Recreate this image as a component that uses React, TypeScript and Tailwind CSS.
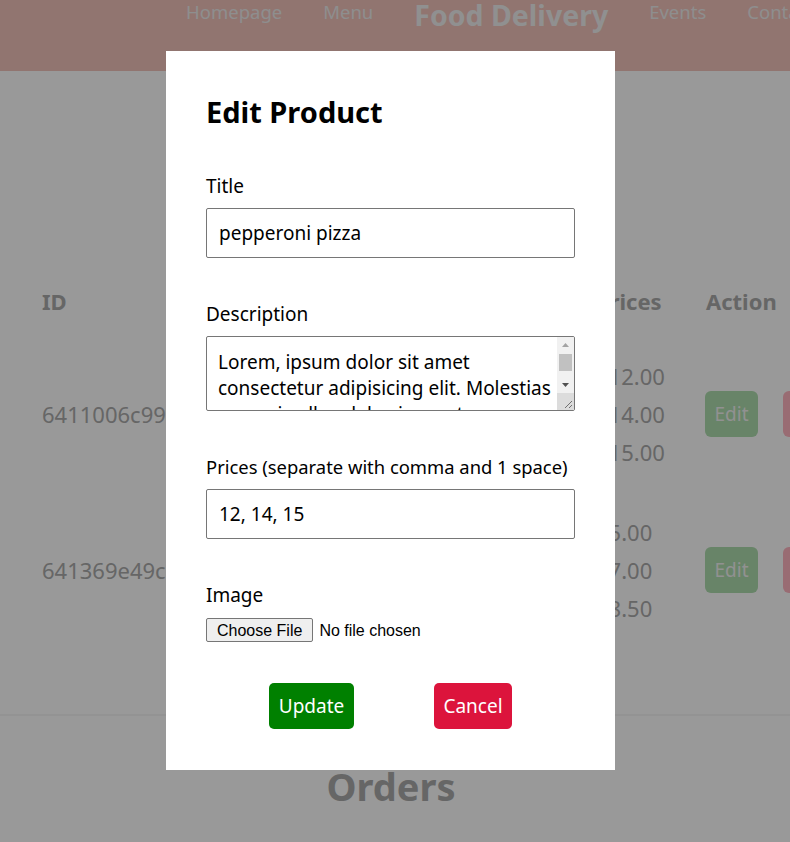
export default function App() {
  const rows = [
    { id: "6411006c99b6a7e8", prices: ["$12.00", "$14.00", "$15.00"], top: "mt-[41px]" },
    { id: "641369e49c2a11f0", prices: ["$5.00", "$7.00", "$8.50"], top: "mt-[42px]" },
  ];

  return (
    <div className="relative h-[842px] w-[790px] overflow-hidden bg-white font-['Noto_Sans',sans-serif]">
      {/* page behind the modal */}
      <header className="h-[71px] bg-[#f2c3bb] overflow-hidden">
        <nav className="flex items-start gap-[41px] pl-[186px] whitespace-nowrap text-[#ededed] text-[18.5px] leading-[24px]">
          <span>Homepage</span>
          <span>Menu</span>
          <span className="text-[28.5px] leading-[30px] font-bold text-[#f0f0f0]">Food Delivery</span>
          <span>Events</span>
          <span>Contact</span>
        </nav>
      </header>

      <div className="pl-[42px] pt-[215px] text-[#aaa] text-[22px] whitespace-nowrap">
        <div className="flex items-center h-[30px] font-bold">
          <span className="w-[554px] shrink-0">ID</span>
          <span className="w-[110px] shrink-0">Prices</span>
          <span className="shrink-0">Action</span>
        </div>
        {rows.map((r) => (
          <div key={r.id} className={`flex items-center ${r.top}`}>
            <span className="w-[554px] shrink-0">{r.id}</span>
            <div className="flex flex-col leading-[38px] w-[109px] shrink-0">
              {r.prices.map((p) => (
                <span key={p}>{p}</span>
              ))}
            </div>
            <span className="shrink-0 bg-[#addcad] text-[#f2f2f2] text-[19px] rounded-[6px] w-[53px] h-[46px] flex items-center justify-center">Edit</span>
            <span className="shrink-0 ml-[25px] bg-[#ffb4c0] rounded-[6px] w-[60px] h-[46px]"></span>
          </div>
        ))}
      </div>

      <div className="mt-[87px] border-t-2 border-[#f5f5f5]"></div>
      <h2 className="mt-[46px] pr-[8px] text-center text-[38px] font-bold leading-[48px] text-[#aaa]">Orders</h2>

      {/* overlay + modal */}
      <div className="absolute inset-0 bg-black/40 pt-[51px] pl-[166px]">
        <div className="w-[449px] h-[719px] bg-white px-[40px] pt-[40px] text-black">
          <h1 className="text-[29px] font-bold leading-[42px]">Edit Product</h1>

          <div className="mt-[39px]">
            <label className="block text-[19px] leading-[28px] mb-[8px]">Title</label>
            <input
              defaultValue="pepperoni pizza"
              className="w-full h-[50px] border border-[#767676] rounded-[2px] px-[12px] text-[19px] outline-none"
            />
          </div>

          <div className="mt-[42px]">
            <label className="block text-[19px] leading-[28px] mb-[8px]">Description</label>
            <div className="flex h-[75px] border border-[#767676] rounded-[2px] overflow-hidden">
              <textarea
                defaultValue="Lorem, ipsum dolor sit amet consectetur adipisicing elit. Molestias corporis ullam laboriosam tempore, accusantium voluptas quibusdam nemo sint."
                className="flex-1 resize-none pl-[11px] pr-[4px] pt-[12px] text-[19px] leading-[26px] outline-none overflow-hidden"
              />
              <div className="w-[17px] bg-[#f1f1f1] flex flex-col items-center">
                <svg width="17" height="17" viewBox="0 0 17 17" className="shrink-0">
                  <path d="M5 10 L8.5 6 L12 10 Z" fill="#a3a3a3" />
                </svg>
                <div className="w-[13px] h-[17px] bg-[#c1c1c1]"></div>
                <div className="flex-1"></div>
                <svg width="17" height="17" viewBox="0 0 17 17" className="shrink-0 -mt-[16px]">
                  <path d="M5 7 L8.5 11 L12 7 Z" fill="#505050" />
                </svg>
                <div className="w-[17px] h-[17px] bg-[#dcdcdc] relative">
                  <svg width="17" height="17" viewBox="0 0 17 17" className="absolute inset-0">
                    <path d="M15 8 L8 15 M15 12 L12 15" stroke="#707070" strokeWidth="1" />
                  </svg>
                </div>
              </div>
            </div>
          </div>

          <div className="mt-[42px]">
            <label className="block text-[18.4px] leading-[28px] mb-[8px] whitespace-nowrap">Prices (separate with comma and 1 space)</label>
            <input
              defaultValue="12, 14, 15"
              className="w-full h-[50px] border border-[#767676] rounded-[2px] px-[12px] text-[19px] outline-none"
            />
          </div>

          <div className="mt-[42px]">
            <label className="block text-[19px] leading-[28px] mb-[9px]">Image</label>
            <input
              type="file"
              className="block h-[24px] text-[16px] font-['Liberation_Sans',sans-serif] file:mr-[6px] file:h-[24px] file:px-[10px] file:border file:border-[#767676] file:rounded-[2px] file:bg-[#efefef] file:text-black"
            />
          </div>

          <div className="mt-[41px] flex justify-center gap-[80px]">
            <button className="h-[46px] w-[85px] rounded-[5px] bg-[#008000] text-white text-[19px]">Update</button>
            <button className="h-[46px] w-[78px] rounded-[5px] bg-[#dc143c] text-white text-[19px]">Cancel</button>
          </div>
        </div>
      </div>
    </div>
  );
}
